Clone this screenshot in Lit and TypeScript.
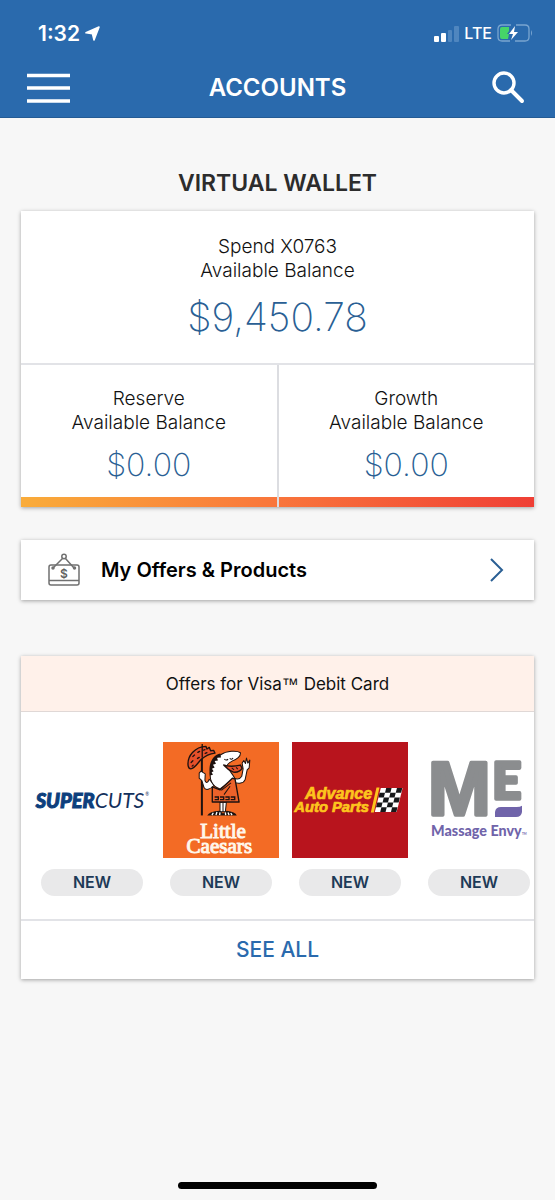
import { LitElement, html, css, svg } from "lit";
import { customElement, property } from "lit/decorators.js";

type Brand = "supercuts" | "caesars" | "advance" | "envy";

const OFFERS: { brand: Brand; name: string }[] = [
  { brand: "supercuts", name: "Supercuts" },
  { brand: "caesars", name: "Little Caesars" },
  { brand: "advance", name: "Advance Auto Parts" },
  { brand: "envy", name: "Massage Envy" },
];

@customElement("brand-logo")
class BrandLogo extends LitElement {
  @property() brand: Brand = "supercuts";

  static styles = css`
    :host { display: block; width: 116px; height: 116px; }
    .logo { display: block; width: 100%; height: 100%; }
    .super { font: italic 900 60px Lato, sans-serif; fill: #0d3f7d; stroke: #0d3f7d; stroke-width: 3; }
    .cuts { font: italic 400 63px Lato, sans-serif; fill: #14305c; }
    .reg { font: 400 14px Lato, sans-serif; fill: #14305c; }
    .caesars { font: 400 63px "Liberation Serif", serif; fill: #fff6ea; stroke: #fff6ea; stroke-width: 3; }
    .advance { font: italic 700 48px "Liberation Sans", sans-serif; fill: #fdc51d; stroke: #fdc51d; stroke-width: 2; }
    .parts { font: italic 700 44px "Liberation Sans", sans-serif; fill: #fdc51d; stroke: #fdc51d; stroke-width: 2; }
    .m { font: 700 226px "Liberation Sans", sans-serif; fill: #8b8d8f; stroke: #8b8d8f; stroke-width: 11; stroke-linejoin: round; }
    .e { font: 900 152px Lato, sans-serif; fill: #8b8d8f; stroke: #8b8d8f; stroke-width: 11; stroke-linejoin: round; }
    .envy { font: 900 43px Lato, sans-serif; fill: #7064aa; }
    .tm { font: 700 9px Lato, sans-serif; fill: #7064aa; }
  `;

  private supercuts() {
    return html`<svg class="logo" viewBox="42 40 348 348" role="img" aria-label="Supercuts">
      <text class="super" x="47" y="237">SUPER</text>
      <text class="cuts" x="224" y="237">CUTS</text>
      <text class="reg" x="376" y="202">®</text>
    </svg>`;
  }

  private caesars() {
    return html`<svg class="logo" viewBox="11 11 346 346" role="img" aria-label="Little Caesars">
      <rect x="11" y="11" width="346" height="346" fill="#f36b25" />
      <path d="M127 52V230" stroke="#1d1210" stroke-width="6" />
      <path d="M86 82C82 52 107 25 139 24L142 32L149 27L153 37L162 36L166 44C151 46 137 52 126 62C113 75 106 90 94 91C89 91 87 87 86 82Z" fill="#e6502a" stroke="#1d1210" stroke-width="4" stroke-linejoin="round" />
      <path d="M95 72l5-5M100 54l5-4M115 42l5-3M114 60l5-3M132 35l4-1M137 45l5-2M98 83l3-3" stroke="#1d1210" stroke-width="4" stroke-linecap="round" />
      <path d="M128 17V58" stroke="#1d1210" stroke-width="4" />
      <path d="M149 122C145 132 140 136 136 125L137 106L124 98L119 104V119L127 126L133 146C138 157 151 153 164 140Z" fill="#fff" stroke="#1d1210" stroke-width="3" stroke-linejoin="round" />
      <path d="M219 117C231 124 241 121 246 113L250 91L247 74L252 66L257 75L260 59L264 74L270 65L268 88L262 94L256 123C252 134 236 137 221 130Z" fill="#fff" stroke="#1d1210" stroke-width="3" stroke-linejoin="round" />
      <path d="M181 191H200L197 219H181Z" fill="#fff" stroke="#1d1210" stroke-width="3" />
      <path d="M190 192V219" stroke="#1d1210" stroke-width="3" />
      <path d="M183 49C200 37 232 36 242 43C243 53 229 63 217 68C210 72 203 76 202 82C206 94 218 105 225 119L209 130L181 151C157 144 148 121 153 97C151 78 163 58 183 49Z" fill="#fff" stroke="#1d1210" stroke-width="3" stroke-linejoin="round" />
      <path d="M182 45C158 50 145 77 151 111L160 109L156 101L162 98L157 91L165 87L160 79L169 76L165 68L175 66L172 58L184 57Z" fill="#1d1210" />
      <path d="M191 79Q211 87 242 80L247 89Q239 103 221 101Q204 94 191 79Z" fill="#e6502a" stroke="#1d1210" stroke-width="4" />
      <path d="M216 88l7 6m6-7l5 5M194 62q6 6 11 0M210 60q6 5 10-1" stroke="#1d1210" stroke-width="3" fill="none" />
      <path d="M158 145L181 154L218 119L226 122L238 190H158Z" fill="#ec622a" stroke="#1d1210" stroke-width="4" stroke-linejoin="round" />
      <path d="M185 155L214 133M193 168L211 143" stroke="#1d1210" stroke-width="3" />
      <path d="M165 175h11v8h-11M181 175h11v8h-11M197 175h11v8h-11M213 175h12v8h-12" stroke="#1d1210" stroke-width="4" fill="none" />
      <path d="M143 230Q149 218 180 216L190 224L201 216Q227 219 231 230Z" fill="#1d1210" />
      <path d="M157 229l4-7m8 7l3-9m8 9l1-8m17 8l-1-8m11 8l-3-8m12 8l-4-6" stroke="#fff" stroke-width="4" />
      <text class="caesars" x="122" y="296">Little</text>
      <text class="caesars" x="81" y="341">Caesars</text>
    </svg>`;
  }

  private advance() {
    const squares: [number, number][] = [];
    for (let row = 0; row < 5; row++) {
      for (let col = 0; col < 4; col++) {
        if ((row + col) % 2 === 1) squares.push([col, row]);
      }
    }
    return html`<svg class="logo" viewBox="8 11 346 346" role="img" aria-label="Advance Auto Parts">
      <rect x="8" y="11" width="346" height="346" fill="#b8141d" />
      <text class="advance" x="47" y="182">Advance</text>
      <text class="parts" x="15" y="219">Auto Parts</text>
      <path d="M260 147H269L252 221H243Z" fill="#fdc51d" />
      <path d="M273 148H338L320 220H255Z" fill="#fff" />
      <g transform="translate(273 148) skewX(-14)">
        ${squares.map(([c, r]) => svg`<rect x=${c * 16} y=${r * 14.4} width="16" height="14.4" fill="#17191b" />`)}
      </g>
    </svg>`;
  }

  private envy() {
    return html`<svg class="logo" viewBox="423 40 348 348" role="img" aria-label="Massage Envy">
      <text class="m" x="444" y="259">M</text>
      <text class="e" x="637" y="210">E</text>
      <path d="M645 265V250Q647 235 663 235H710Q721 235 726 231V250Q724 265 708 265Z" fill="#7064aa" />
      <text class="envy" x="453" y="323">Massage Envy</text>
      <text class="tm" x="726" y="320">TM</text>
    </svg>`;
  }

  render() {
    return this[this.brand]();
  }
}

@customElement("balance-block")
class BalanceBlock extends LitElement {
  @property() name = "";
  @property() amount = "";
  @property({ type: Boolean, reflect: true }) primary = false;

  static styles = css`
    :host { display: block; text-align: center; padding: 22px 8px 12px; }
    .name { font-size: 19px; line-height: 24px; font-weight: 300; color: #111; margin: 0; }
    .amount { font-size: 32px; line-height: 40px; font-weight: 200; color: #2a5f94; margin: 10px 0 0; }
    :host([primary]) { padding: 24px 8px 22px; }
    :host([primary]) .amount { font-size: 39px; line-height: 48px; }
  `;

  render() {
    return html`
      <p class="name">${this.name}<br />Available Balance</p>
      <p class="amount">${this.amount}</p>
    `;
  }
}

@customElement("app-root")
class AppRoot extends LitElement {
  static styles = css`
    :host {
      display: flex; flex-direction: column; min-height: 100vh;
      background: #f7f7f7; color: #111;
      font-family: Inter, "Liberation Sans", sans-serif;
    }
    * { box-sizing: border-box; }
    button { font: inherit; color: inherit; background: none; border: 0; padding: 0; cursor: pointer; }
    svg { display: block; }
    .top { background: #2a6aad; color: #fff; border-bottom: 1px solid #245b94; }
    .status { display: flex; justify-content: space-between; align-items: center; height: 58px; padding: 8px 22px 0 38px; }
    .time { display: flex; align-items: center; gap: 5px; font-size: 21px; font-weight: 600; }
    .signal { display: flex; align-items: center; gap: 5px; font-size: 16px; font-weight: 500; }
    .nav { display: grid; grid-template-columns: 44px 1fr 44px; align-items: center; height: 59px; padding: 0 26px; }
    .nav h1 { margin: 0; text-align: center; font-size: 24px; line-height: 32px; font-weight: 600; }
    .search { justify-self: end; }
    main { padding: 49px 21px 0; }
    h2 { margin: 0 0 12px; text-align: center; font-size: 23px; line-height: 32px; font-weight: 600; color: #2c2c2c; }
    .card { background: #fff; box-shadow: 0 1px 4px rgba(0, 0, 0, 0.35); }
    .pair { display: grid; grid-template-columns: 1fr 1fr; border-top: 2px solid #e2e3e7; }
    .pair > :first-child { border-right: 1px solid #dcdde1; }
    .pair > :last-child { border-left: 1px solid #dcdde1; }
    .bar { height: 10px; background: linear-gradient(90deg, #f9ac3a, #f9753b 50%, #ef3f35); display: flex; justify-content: center; }
    .notch { width: 2px; background: #dcdde1; }
    .link { display: flex; align-items: center; width: 100%; height: 60px; margin: 33px 0 56px; padding: 0 30px 0 26px; background: #fff; color: #000; text-decoration: none; font-size: 20px; font-weight: 600; }
    .label { flex: 1; padding-left: 20px; }
    .offers h3 { margin: 0; height: 56px; line-height: 56px; text-align: center; background: #fff1ea; border-bottom: 1px solid #e0d8d6; font-size: 17px; font-weight: 400; }
    .mark { font-family: "Liberation Sans", sans-serif; }
    .list { display: flex; gap: 13px; margin: 0; padding: 30px 0 23px 13px; list-style: none; overflow-x: auto; scrollbar-width: none; }
    .item { display: flex; flex-direction: column; align-items: center; gap: 11px; }
    .pill { width: 102px; line-height: 27px; border-radius: 14px; background: #e9e9ea; color: #1d3a57; text-align: center; font-size: 16px; font-weight: 600; }
    .all { display: block; width: 100%; height: 60px; padding-bottom: 2px; border-top: 2px solid #e2e3e7; color: #2a6aad; font-size: 21px; font-weight: 500; }
    .home { width: 36%; height: 7px; margin: auto auto 11px; border-radius: 4px; background: #000; }
  `;

  render() {
    return html`
      <header class="top">
        <div class="status">
          <div class="time">
            <span>1:32</span>
            <svg width="15" height="15" viewBox="0 0 15 15" aria-hidden="true"><path d="M14 1L9 14L7.500 7.800L1 6.800Z" fill="#fff" stroke="#fff" stroke-width="1.600" stroke-linejoin="round" /></svg>
          </div>
          <div class="signal">
            <svg width="25" height="17" viewBox="0 0 25 17" aria-hidden="true">
              <rect x="0" y="11" width="5" height="6" rx="1" fill="#fff" />
              <rect x="7" y="8" width="5" height="9" rx="1" fill="#fff" />
              <rect x="14" y="5" width="4" height="12" rx="1" fill="#4f86bf" />
              <rect x="20" y="1" width="5" height="16" rx="1" fill="#4f86bf" />
            </svg>
            <span>LTE</span>
            <svg width="36" height="18" viewBox="0 0 36 18" aria-hidden="true">
              <path d="M14 1H5Q1 1 1 5V13Q1 17 5 17H13M19 1H28Q32 1 32 5V13Q32 17 28 17H18" fill="none" stroke="#79a5d0" stroke-width="1.300" />
              <path d="M34 6Q36 9 34 12Z" fill="#79a5d0" />
              <path d="M5 3H12V7L10 10H12L11 15H5Q3 15 3 13V5Q3 3 5 3Z" fill="#46d468" />
              <path d="M18 2L12 10H16L14 16L21 8H17Z" fill="#fff" />
            </svg>
          </div>
        </div>
        <nav class="nav">
          <button aria-label="Menu">
            <svg width="44" height="30" viewBox="0 0 44 30"><path d="M1 2.500H44M1 15H44M1 28H44" stroke="#fff" stroke-width="3.600" /></svg>
          </button>
          <h1>ACCOUNTS</h1>
          <button class="search" aria-label="Search">
            <svg width="38" height="34" viewBox="0 0 38 34"><circle cx="13" cy="12" r="10" fill="none" stroke="#fff" stroke-width="3.400" /><path d="M20 19L31 30" stroke="#fff" stroke-width="4" stroke-linecap="round" /></svg>
          </button>
        </nav>
      </header>

      <main>
        <h2>VIRTUAL WALLET</h2>
        <section class="card">
          <balance-block primary name="Spend X0763" amount="$9,450.78"></balance-block>
          <div class="pair">
            <balance-block name="Reserve" amount="$0.00"></balance-block>
            <balance-block name="Growth" amount="$0.00"></balance-block>
          </div>
          <div class="bar"><span class="notch"></span></div>
        </section>

        <a class="card link" href="#offers">
          <svg width="34" height="34" viewBox="0 0 34 34" fill="none" stroke="#707070" stroke-width="1.500" aria-hidden="true">
            <rect x="2" y="12" width="30" height="20" rx="2" />
            <path d="M2 27.500H32M6 15L15.500 5.500M27 15L18.500 5.500" />
            <circle cx="17" cy="3.500" r="2.200" />
            <circle cx="6" cy="15" r="1" fill="#707070" /><circle cx="27.500" cy="15" r="1" fill="#707070" />
            <text x="17" y="25" text-anchor="middle" font-size="12" font-weight="600" fill="#606060" stroke="none">$</text>
          </svg>
          <span class="label">My Offers &amp; Products</span>
          <svg width="14" height="24" viewBox="0 0 14 24" aria-hidden="true"><path d="M1 1L12 12L1 23" fill="none" stroke="#2a5f94" stroke-width="2" /></svg>
        </a>

        <section class="card offers" id="offers">
          <h3>Offers for Visa<span class="mark">™</span> Debit Card</h3>
          <ul class="list">
            ${OFFERS.map((o) => html`<li class="item"><brand-logo .brand=${o.brand}></brand-logo><span class="pill">NEW</span></li>`)}
          </ul>
          <button class="all">SEE ALL</button>
        </section>
      </main>
      <div class="home"></div>
    `;
  }
}
